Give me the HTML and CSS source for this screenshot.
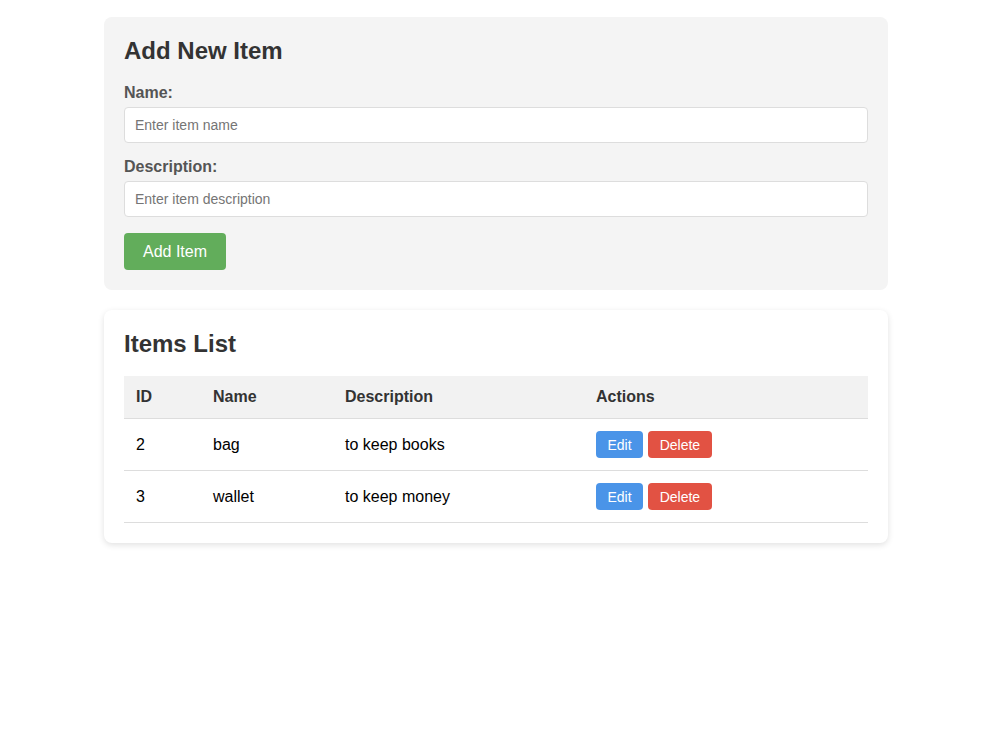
FILE: index.html
```html
<!DOCTYPE html>
<html lang="en">
<head>
    <meta charset="UTF-8">
    <meta name="viewport" content="width=device-width, initial-scale=1.0">
    <title>Items Manager</title>
    <link rel="stylesheet" href="styles.css">
</head>
<body>
    <div class="container">
        <!-- Add form -->
        <div class="card form-card">
            <h2>Add New Item</h2>
            <form id="item-form">
                <label for="name">Name:</label>
                <input type="text" id="name" placeholder="Enter item name">
                <label for="description">Description:</label>
                <input type="text" id="description" placeholder="Enter item description">
                <button type="submit" class="btn-add">Add Item</button>
            </form>
        </div>

        <!-- Items table -->
        <div class="card list-card">
            <h2>Items List</h2>
            <table>
                <thead>
                    <tr>
                        <th class="col-id">ID</th>
                        <th class="col-name">Name</th>
                        <th class="col-desc">Description</th>
                        <th>Actions</th>
                    </tr>
                </thead>
                <tbody>
                    <tr>
                        <td>2</td>
                        <td>bag</td>
                        <td>to keep books</td>
                        <td>
                            <button class="btn-edit">Edit</button><button class="btn-delete">Delete</button>
                        </td>
                    </tr>
                    <tr>
                        <td>3</td>
                        <td>wallet</td>
                        <td>to keep money</td>
                        <td>
                            <button class="btn-edit">Edit</button><button class="btn-delete">Delete</button>
                        </td>
                    </tr>
                </tbody>
            </table>
        </div>
    </div>
</body>
</html>
```

FILE: styles.css
```css
/* Page */
body {
    font-family: "Liberation Sans", Arial, sans-serif;
    margin: 0;
    padding: 17px 8px 0 0;
    background-color: #ffffff;
    color: #000;
}

.container {
    width: 784px;
    margin: 0 auto;
}

/* Cards */
.card {
    border-radius: 8px;
    padding: 20px;
    margin-bottom: 20px;
}

.form-card {
    background-color: #f4f4f4;
}

.list-card {
    background-color: #ffffff;
    box-shadow: 0 2px 6px rgba(0, 0, 0, 0.12);
}

h2 {
    font-size: 24px;
    color: #333;
    margin: 0 0 19px;
}

.list-card h2 {
    margin-bottom: 18px;
}

/* Form */
label {
    display: block;
    font-weight: bold;
    color: #555;
    margin-bottom: 5px;
}

input[type="text"] {
    display: block;
    width: 100%;
    box-sizing: border-box;
    padding: 9px 10px;
    font-family: inherit;
    font-size: 14px;
    border: 1px solid #ddd;
    border-radius: 4px;
    margin-bottom: 15px;
    background-color: #fff;
}

input::placeholder {
    color: #757575;
}

button {
    font-family: inherit;
    border: none;
    color: #fff;
    cursor: pointer;
    border-radius: 4px;
}

.btn-add {
    background-color: #62ad5b;
    font-size: 16px;
    padding: 9.5px 19px;
    margin-top: 1px;
}

/* Table */
table {
    width: 100%;
    border-collapse: collapse;
}

th, td {
    text-align: left;
    padding: 12px;
    border-bottom: 1px solid #ddd;
    font-size: 16px;
}

th {
    background-color: #f2f2f2;
    color: #333;
}

.col-id {
    width: 53px;
}

.col-name {
    width: 108px;
}

.col-desc {
    width: 227px;
}

.btn-edit,
.btn-delete {
    font-size: 14px;
    padding: 5.5px 11.5px;
}

.btn-edit {
    background-color: #4a94e8;
    margin-right: 5px;
}

.btn-delete {
    background-color: #e25243;
}
```
